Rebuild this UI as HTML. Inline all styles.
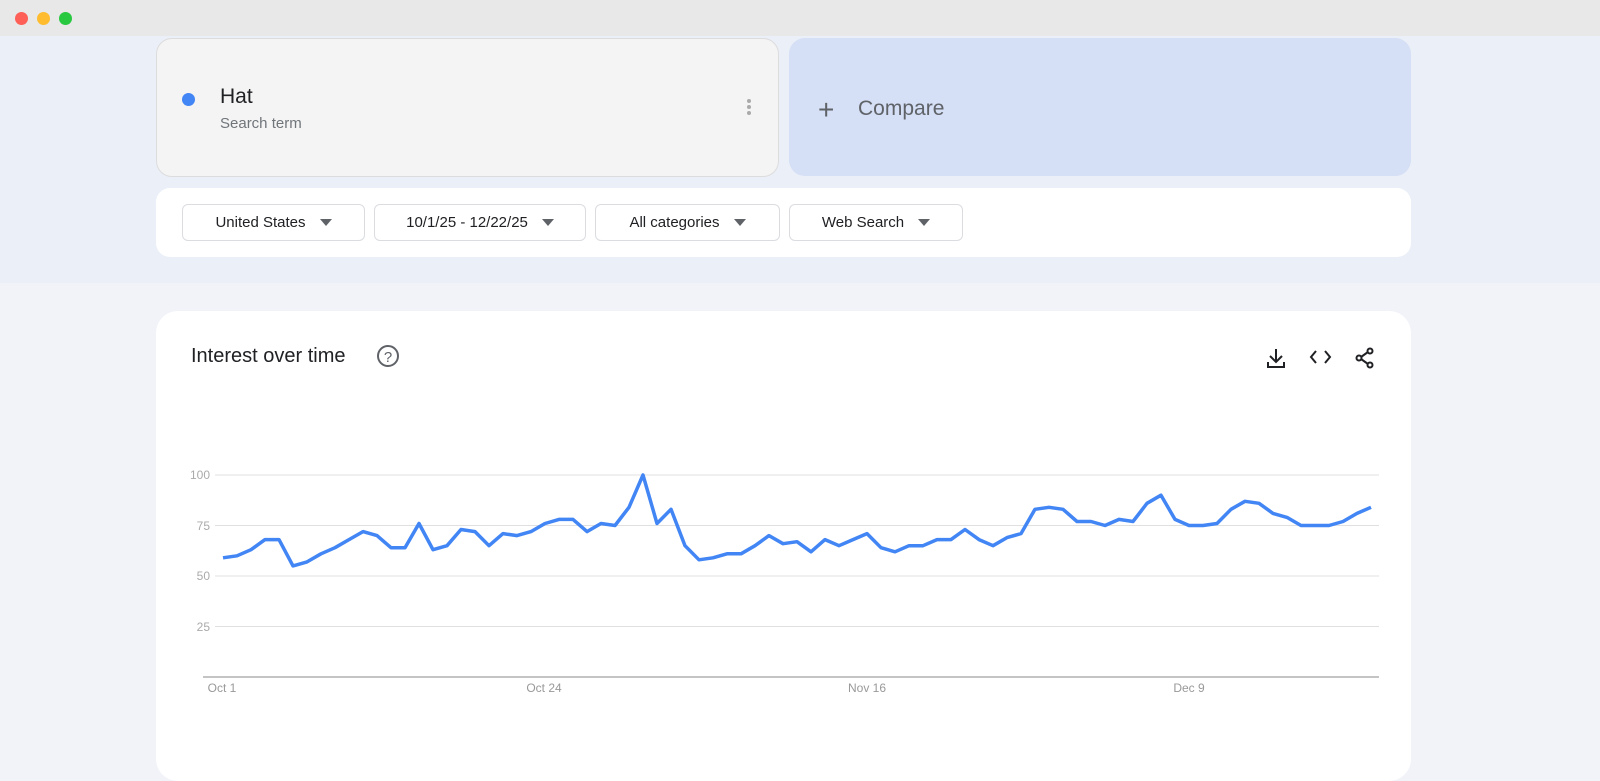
<!DOCTYPE html>
<html><head><meta charset="utf-8"><style>
*{margin:0;padding:0;box-sizing:border-box}
body{width:1600px;height:764px;overflow:hidden;background:#f1f3f8;font-family:"Liberation Sans",sans-serif;position:relative}
.abs{position:absolute}
.bar{left:0;top:0;width:1600px;height:36px;background:#e8e8e8}
.dot{top:12px;width:13px;height:13px;border-radius:50%}
.top{left:0;top:36px;width:1600px;height:247px;background:#ebeff8}
.term{left:156px;top:38px;width:623px;height:139px;background:#f4f4f4;border:1px solid #dcdcdc;border-radius:16px}
.cmp{left:789px;top:38px;width:622px;height:138px;background:#d5dff5;border-radius:16px}
.filt{left:156px;top:188px;width:1255px;height:69px;background:#fff;border-radius:14px}
.btn{top:204px;height:37px;border:1px solid #dadce0;border-radius:6px;background:#fff;font-size:15px;color:#202124;display:flex;align-items:center;justify-content:center;gap:14px}
.tri{width:0;height:0;border-left:6px solid transparent;border-right:6px solid transparent;border-top:7px solid #5f6368}
.card{left:156px;top:311px;width:1255px;height:470px;background:#fff;border-radius:22px}
</style></head><body>
<div class="abs bar"></div>
<div class="abs dot" style="left:15px;background:#fe5f57"></div>
<div class="abs dot" style="left:37px;background:#febc2e"></div>
<div class="abs dot" style="left:59px;background:#28c840"></div>
<div class="abs top"></div>
<div class="abs term"></div>
<div class="abs" style="left:182px;top:93px;width:13px;height:13px;border-radius:50%;background:#4285f4"></div>
<div class="abs" style="left:220px;top:85px;font-size:21px;color:#202124">Hat</div>
<div class="abs" style="left:220px;top:115px;font-size:15px;color:#70757a">Search term</div>
<div class="abs" style="left:747px;top:99px;width:4px;height:4px;border-radius:50%;background:#aaa;box-shadow:0 6px 0 #aaa,0 12px 0 #aaa"></div>
<div class="abs cmp"></div>
<div class="abs" style="left:818px;top:94px;font-size:28px;color:#5f6368;font-weight:300">+</div>
<div class="abs" style="left:858px;top:97px;font-size:21px;color:#5f6368">Compare</div>
<div class="abs filt"></div>
<div class="abs btn" style="left:182px;width:183px">United States<span class="tri"></span></div>
<div class="abs btn" style="left:374px;width:212px">10/1/25 - 12/22/25<span class="tri"></span></div>
<div class="abs btn" style="left:595px;width:185px">All categories<span class="tri"></span></div>
<div class="abs btn" style="left:789px;width:174px">Web Search<span class="tri"></span></div>
<div class="abs card"></div>
<div class="abs" style="left:191px;top:345px;font-size:20px;color:#202124">Interest over time</div>
<svg class="abs" style="left:0;top:0" width="1600" height="764" viewBox="0 0 1600 764">
<g fill="none" stroke="#5f6368" stroke-width="2">
<circle cx="388" cy="356" r="10"/>
</g>
<text x="388" y="362" font-size="15" text-anchor="middle" fill="#5f6368" font-family="Liberation Sans">?</text>
<g fill="none" stroke="#202124" stroke-width="2">
<path d="M1276 349v13M1270 356l6 6 6-6M1268 362v5h16v-5"/>
<path d="M1316 351l-5 6 5 6M1325 351l5 6-5 6"/>
<circle cx="1370" cy="351" r="2.5"/><circle cx="1359" cy="358" r="2.5"/><circle cx="1370" cy="365" r="2.5"/>
<path d="M1361 357l7-5M1361 359l7 5"/>
</g>
<g stroke="#e0e0e0" stroke-width="1">
<line x1="215" y1="475" x2="1379" y2="475"/><line x1="215" y1="525.5" x2="1379" y2="525.5"/>
<line x1="215" y1="576" x2="1379" y2="576"/><line x1="215" y1="626.5" x2="1379" y2="626.5"/>
</g>
<line x1="203" y1="677" x2="1379" y2="677" stroke="#b0b0b0" stroke-width="1.5"/>
<g font-family="Liberation Sans" font-size="12" fill="#aaa" text-anchor="end">
<text x="210" y="479">100</text><text x="210" y="530">75</text><text x="210" y="580">50</text><text x="210" y="631">25</text>
</g>
<g font-family="Liberation Sans" font-size="12" fill="#999" text-anchor="middle">
<text x="222" y="692">Oct 1</text><text x="544" y="692">Oct 24</text><text x="867" y="692">Nov 16</text><text x="1189" y="692">Dec 9</text>
</g>
<polyline fill="none" stroke="#4285f4" stroke-width="3.5" stroke-linejoin="round" points="223,557.8 237,555.8 251,549.7 265,539.6 279,539.6 293,565.9 307,561.9 321,553.8 335,547.7 349,539.6 363,531.6 377,535.6 391,547.7 405,547.7 419,523.5 433,549.7 447,545.7 461,529.5 475,531.6 489,545.7 503,533.6 517,535.6 531,531.6 545,523.5 559,519.4 573,519.4 587,531.6 601,523.5 615,525.5 629,507.3 643,475 657,523.5 671,509.3 685,545.7 699,559.8 713,557.8 727,553.8 741,553.8 755,545.7 769,535.6 783,543.7 797,541.7 811,551.8 825,539.6 839,545.7 853,539.6 867,533.6 881,547.7 895,551.8 909,545.7 923,545.7 937,539.6 951,539.6 965,529.5 979,539.6 993,545.7 1007,537.6 1021,533.6 1035,509.3 1049,507.3 1063,509.3 1077,521.5 1091,521.5 1105,525.5 1119,519.4 1133,521.5 1147,503.3 1161,495.2 1175,519.4 1189,525.5 1203,525.5 1217,523.5 1231,509.3 1245,501.3 1259,503.3 1273,513.4 1287,517.4 1301,525.5 1315,525.5 1329,525.5 1343,521.5 1357,513.4 1371,507.3"/>
</svg>
</body></html>
